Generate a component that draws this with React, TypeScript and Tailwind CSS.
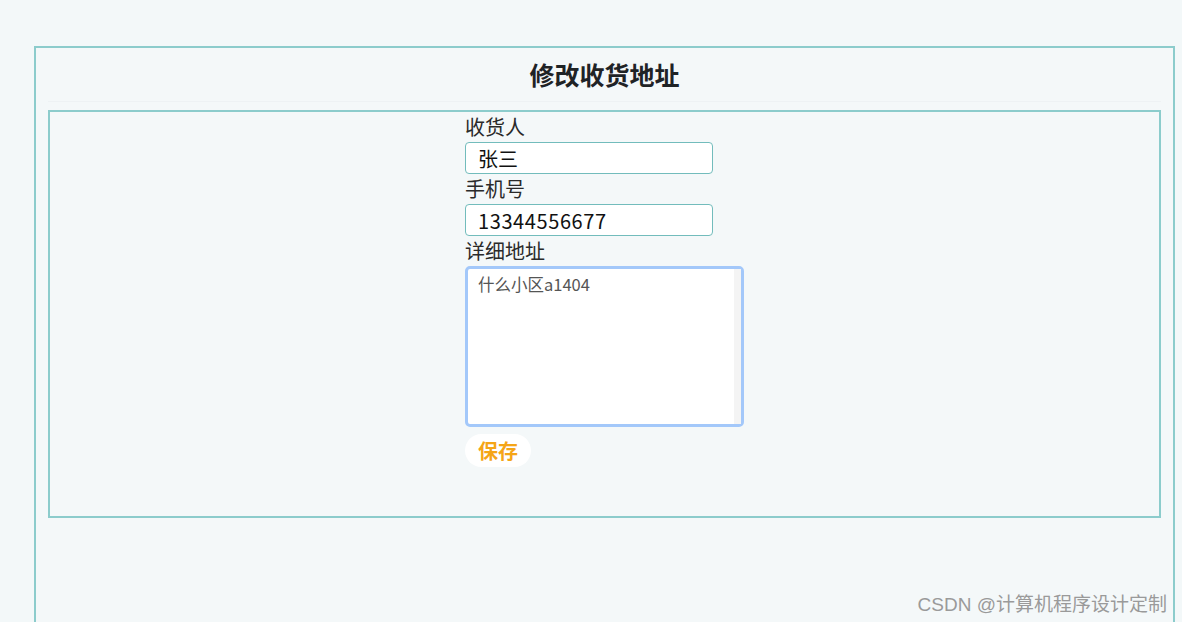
import { useState } from 'react';

const font = { fontFamily: '"Microsoft YaHei", "Noto Sans CJK SC", "Noto Sans", sans-serif' };

export default function App() {
  const [name, setName] = useState('张三');
  const [phone, setPhone] = useState('13344556677');
  const [address, setAddress] = useState('什么小区a1404');

  return (
    <div className="relative h-[622px] w-full overflow-hidden bg-[#f3f8f9]" style={font}>
      <div className="pt-[46px] pl-[34px] pr-[7px]">
        <div className="h-[640px] border-2 border-[#8ccccc] bg-[#f4f8f9] px-[12px]">
          <div className="flex h-[54px] items-center justify-center border-b border-[#eef2f4]">
            <h1 className="text-[25px] font-bold text-[#1f2326]">修改收货地址</h1>
          </div>
          <div className="mt-[8px] h-[408px] border-2 border-[#8ccccc]">
            <form
              className="mx-auto flex w-[279px] flex-col"
              onSubmit={e => e.preventDefault()}
            >
              <label className="text-[20px] leading-[30px] text-[#2a2a2a]">收货人</label>
              <input
                value={name}
                onChange={e => setName(e.target.value)}
                className="h-[32px] w-[248px] rounded-[4px] border border-[#72bcbc] bg-white px-[12px] text-[20px] text-[#111] outline-none"
              />
              <label className="text-[20px] leading-[30px] text-[#2a2a2a]">手机号</label>
              <input
                value={phone}
                onChange={e => setPhone(e.target.value)}
                className="h-[32px] w-[248px] rounded-[4px] border border-[#72bcbc] bg-white px-[12px] text-[20px] tracking-[0.6px] text-[#111] outline-none"
              />
              <label className="text-[20px] leading-[30px] text-[#2a2a2a]">详细地址</label>
              <div className="relative h-[161px] w-[279px]">
                <textarea
                  value={address}
                  onChange={e => setAddress(e.target.value)}
                  className="h-full w-full resize-none rounded-[5px] border-[3px] border-[#a3c8fa] bg-white px-[10px] py-[3px] text-[16.5px] text-[#555] outline-none"
                />
                <div className="absolute right-[3px] top-[3px] bottom-[3px] w-[7px] bg-[#f4f4f4]" />
              </div>
              <div className="mt-[7px]">
                <button
                  type="submit"
                  className="h-[33px] rounded-full bg-white px-[13px] text-[20px] font-bold text-[#f5a517]"
                >
                  保存
                </button>
              </div>
            </form>
          </div>
        </div>
      </div>
      <div className="absolute right-[15px] top-[591px] text-[19px] text-[#9a9a9a]" style={{ fontFamily: '"Liberation Sans", "Noto Sans CJK SC", sans-serif' }}>
        CSDN @计算机程序设计定制
      </div>
    </div>
  );
}
